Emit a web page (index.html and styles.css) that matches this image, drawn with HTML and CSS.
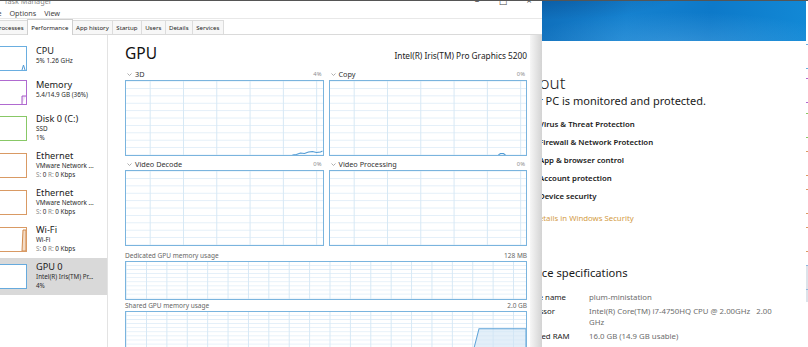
FILE: index.html
```html
<!DOCTYPE html>
<html>
<head>
  <title>Task Manager</title>
  <link rel="stylesheet" href="styles.css">
</head>
<body>
  <div class="topline"></div>

  <div class="settings">
    <div class="banner"></div>
    <div class="settings-body">
      <h1>About</h1>
      <p class="status">Your PC is monitored and protected.</p>
      <ul class="checks">
        <li>Virus &amp; Threat Protection</li>
        <li>Firewall &amp; Network Protection</li>
        <li>App &amp; browser control</li>
        <li>Account protection</li>
        <li>Device security</li>
      </ul>
      <a class="details-link">See details in Windows Security</a>
      <h2>Device specifications</h2>
      <div class="specs">
        <div class="spec-row"><span class="spec-key">Device name</span><span class="spec-val">plum-ministation</span></div>
        <div class="spec-row"><span class="spec-key">Processor</span><span class="spec-val">Intel(R) Core(TM) i7-4750HQ CPU @ 2.00GHz&nbsp;&nbsp; 2.00 GHz</span></div>
        <div class="spec-row"><span class="spec-key">Installed RAM</span><span class="spec-val">16.0 GB (14.9 GB usable)</span></div>
      </div>
    </div>
  </div>

  <div class="taskmgr">
    <div class="titlebar">
      <span class="app-icon"></span>
      <span class="title">Task Manager</span>
      <span class="win-buttons"><span>&#8211;</span><span>&#9633;</span><span>&#215;</span></span>
    </div>
    <div class="menubar">
      <span>File</span><span>Options</span><span>View</span>
    </div>
    <div class="tabs">
      <span class="tab">Processes</span>
      <span class="tab active">Performance</span>
      <span class="tab">App history</span>
      <span class="tab">Startup</span>
      <span class="tab">Users</span>
      <span class="tab">Details</span>
      <span class="tab">Services</span>
    </div>

    <div class="content">
      <div class="sidebar">
        <div class="item">
          <div class="thumb cpu"><svg viewBox="0 0 46 23" preserveAspectRatio="none"><polyline points="42,23 43.5,18 45,23" /></svg></div>
          <div class="item-text">
            <div class="item-title">CPU</div>
            <div class="item-sub">5% 1.26 GHz</div>
          </div>
        </div>
        <div class="item">
          <div class="thumb mem"><svg viewBox="0 0 46 23" preserveAspectRatio="none"><polyline points="42,23 42,15 46,15" /></svg></div>
          <div class="item-text">
            <div class="item-title">Memory</div>
            <div class="item-sub">5.4/14.9 GB (36%)</div>
          </div>
        </div>
        <div class="item">
          <div class="thumb disk"></div>
          <div class="item-text">
            <div class="item-title">Disk 0 (C:)</div>
            <div class="item-sub">SSD</div>
            <div class="item-sub">1%</div>
          </div>
        </div>
        <div class="item">
          <div class="thumb net"></div>
          <div class="item-text">
            <div class="item-title">Ethernet</div>
            <div class="item-sub">VMware Network ...</div>
            <div class="item-sub"><span class="dim">S:</span> 0 <span class="dim">R:</span> 0 Kbps</div>
          </div>
        </div>
        <div class="item">
          <div class="thumb net"></div>
          <div class="item-text">
            <div class="item-title">Ethernet</div>
            <div class="item-sub">VMware Network ...</div>
            <div class="item-sub"><span class="dim">S:</span> 0 <span class="dim">R:</span> 0 Kbps</div>
          </div>
        </div>
        <div class="item">
          <div class="thumb net"><svg viewBox="0 0 46 23" preserveAspectRatio="none"><polygon points="42,23 43,2 46,2 46,23" /></svg></div>
          <div class="item-text">
            <div class="item-title">Wi-Fi</div>
            <div class="item-sub">Wi-Fi</div>
            <div class="item-sub"><span class="dim">S:</span> 0 <span class="dim">R:</span> 0 Kbps</div>
          </div>
        </div>
        <div class="item selected">
          <div class="thumb gpu"></div>
          <div class="item-text">
            <div class="item-title">GPU 0</div>
            <div class="item-sub">Intel(R) Iris(TM) Pr...</div>
            <div class="item-sub">4%</div>
          </div>
        </div>
      </div>

      <div class="main">
        <div class="main-head">
          <span class="main-title">GPU</span>
          <span class="main-model">Intel(R) Iris(TM) Pro Graphics 5200</span>
        </div>

        <div class="engines">
          <div class="engine">
            <div class="engine-head">
              <span class="engine-name"><svg class="chev" viewBox="0 0 5 3"><polyline points="0.5,0.5 2.5,2.5 4.5,0.5" /></svg>3D</span>
              <span class="engine-val">4%</span>
            </div>
            <div class="graph">
              <svg viewBox="0 0 196 74" preserveAspectRatio="none"><polyline points="166,74 170,73.5 174,72 178,72.5 182,71 186,70.5 190,71.5 194,71 196,70" /></svg>
            </div>
          </div>
          <div class="engine">
            <div class="engine-head">
              <span class="engine-name"><svg class="chev" viewBox="0 0 5 3"><polyline points="0.5,0.5 2.5,2.5 4.5,0.5" /></svg>Copy</span>
              <span class="engine-val">0%</span>
            </div>
            <div class="graph">
              <svg viewBox="0 0 196 74" preserveAspectRatio="none"><polyline points="168,74 170,72.5 173,72.5 175,74" /></svg>
            </div>
          </div>
          <div class="engine">
            <div class="engine-head">
              <span class="engine-name"><svg class="chev" viewBox="0 0 5 3"><polyline points="0.5,0.5 2.5,2.5 4.5,0.5" /></svg>Video Decode</span>
              <span class="engine-val">0%</span>
            </div>
            <div class="graph"></div>
          </div>
          <div class="engine">
            <div class="engine-head">
              <span class="engine-name"><svg class="chev" viewBox="0 0 5 3"><polyline points="0.5,0.5 2.5,2.5 4.5,0.5" /></svg>Video Processing</span>
              <span class="engine-val">0%</span>
            </div>
            <div class="graph"></div>
          </div>
        </div>

        <div class="mem-head"><span>Dedicated GPU memory usage</span><span>128 MB</span></div>
        <div class="graph mem-graph dedicated"></div>
        <div class="mem-head"><span>Shared GPU memory usage</span><span>2.0 GB</span></div>
        <div class="graph mem-graph shared">
          <svg viewBox="0 0 400 38" preserveAspectRatio="none"><polygon points="347,38 353,16 400,16 400,38" /></svg>
        </div>
      </div>

      <div class="edge"></div>
    </div>
  </div>

  <div class="peek">
    <div class="peek-item"><div class="peek-box cpu"></div></div>
    <div class="peek-item"><div class="peek-box mem"></div></div>
    <div class="peek-item tall"><div class="peek-box disk"></div></div>
    <div class="peek-item tall"><div class="peek-box net"></div></div>
    <div class="peek-item tall"><div class="peek-box net"></div></div>
    <div class="peek-item tall"><div class="peek-box net"></div></div>
    <div class="peek-item tall selected"><div class="peek-box gpu"></div></div>
  </div>
</body>
</html>
```

FILE: styles.css
```css
body {
  margin: 0;
  width: 808px;
  height: 347px;
  overflow: hidden;
  position: relative;
  background: #fff;
  font-family: "Noto Sans", "DejaVu Sans", sans-serif;
  color: #1a1a1a;
}

.topline {
  position: absolute;
  left: 0;
  top: 0;
  width: 808px;
  height: 1px;
  background: #555;
  z-index: 5;
}

/* ---------- settings window (behind) ---------- */
.settings {
  position: absolute;
  left: 480px;
  top: 0;
  width: 326px;
  height: 347px;
  background: #fff;
  z-index: 1;
}
.banner {
  height: 41px;
  background:
    radial-gradient(ellipse 240px 50px at 62% 115%, rgba(120, 190, 240, 0.35), transparent 70%),
    radial-gradient(ellipse 200px 40px at 20% -20%, rgba(0, 40, 100, 0.35), transparent 70%),
    linear-gradient(100deg, #0b62ad 0%, #1581cf 45%, #0d79c9 70%, #1289d6 100%);
}
.settings-body {
  padding: 32px 0 0 39px;
}
.settings h1 {
  margin: 0;
  font-size: 17px;
  line-height: 20px;
  font-weight: 300;
}
.status {
  margin: 0;
  font-size: 11px;
  line-height: 15px;
}
.checks {
  list-style: none;
  margin: 7px 0 0;
  padding-left: 20px;
}
.checks li {
  font-size: 7.8px;
  line-height: 18px;
  font-weight: 600;
}
.details-link {
  display: block;
  margin-top: 8px;
  font-size: 7.8px;
  line-height: 10px;
  color: #d39b44;
}
.settings h2 {
  margin: 42px 0 0;
  font-size: 11.2px;
  line-height: 16px;
  font-weight: 400;
}
.specs {
  margin-top: 11px;
}
.spec-row {
  display: flex;
  font-size: 7.8px;
  line-height: 11px;
  margin-bottom: 3px;
}
.spec-key {
  width: 70px;
  flex: none;
  color: #222;
}
.spec-val {
  width: 190px;
  color: #6d6d6d;
}

/* ---------- task manager window (front) ---------- */
.taskmgr {
  position: absolute;
  left: -30px;
  top: -7px;
  width: 572px;
  height: 360px;
  background: #fff;
  z-index: 2;
  display: flex;
  flex-direction: column;
}
.titlebar {
  height: 17px;
  display: flex;
  align-items: center;
  padding-left: 22px;
  font-size: 7.3px;
  color: #8a8a8a;
}
.app-icon {
  width: 8px;
  height: 7px;
  background: #6b9bc9;
  margin-right: 4px;
}
.win-buttons {
  margin-left: auto;
  display: flex;
  color: #444;
  font-size: 9px;
}
.win-buttons span {
  width: 26px;
  text-align: center;
}
.menubar {
  height: 10px;
  line-height: 10px;
  padding-left: 17px;
  border-bottom: 1px solid #e8e8e8;
  font-size: 7.2px;
  color: #444;
  display: flex;
  gap: 2px;
}
.menubar span {
  padding: 0 3px;
}
.tabs {
  height: 15px;
  border-bottom: 1px solid #dadada;
  padding-left: 21px;
  display: flex;
  align-items: flex-end;
}
.tab {
  height: 13px;
  line-height: 13px;
  padding: 0 3.3px;
  border: 1px solid #dcdcdc;
  border-bottom: none;
  margin-right: -1px;
  background: #f7f7f7;
  font-size: 6.1px;
  color: #222;
}
.tab.active {
  height: 15px;
  line-height: 15px;
  margin-bottom: -1px;
  background: #fff;
  border-color: #cfcfcf;
  position: relative;
  z-index: 1;
}

.content {
  flex: 1;
  display: flex;
}

/* sidebar */
.sidebar {
  width: 137px;
  border-right: 1px solid #e3e3e3;
  padding-top: 7px;
  flex: none;
}
.item {
  display: flex;
  padding: 4px 0 5px 9px;
}
.item.selected {
  background: #d9d9d9;
}
.thumb {
  width: 48px;
  height: 25px;
  box-sizing: border-box;
  border: 1px solid;
  background: #fff;
  align-self: center;
  margin-right: 9px;
  flex: none;
}
.thumb svg {
  display: block;
  width: 100%;
  height: 100%;
}
.thumb.cpu { border-color: #6aaee0; }
.thumb.cpu polyline { fill: none; stroke: #4f99d3; stroke-width: 1; }
.thumb.mem { border-color: #b06ad0; }
.thumb.mem polyline { fill: #f1e3f7; stroke: #a459c6; stroke-width: 1; }
.thumb.disk { border-color: #88c866; }
.thumb.net { border-color: #d99a64; }
.thumb.net polygon { fill: #f4dcc6; stroke: #cf8a4e; stroke-width: 1; }
.thumb.gpu { border-color: #66aadd; }
.item-text {
  align-self: flex-start;
  white-space: nowrap;
}
.item-title {
  font-size: 9.2px;
  line-height: 10px;
  color: #1a1a1a;
}
.item-sub {
  font-size: 6.3px;
  line-height: 9px;
  color: #2a2a2a;
}
.dim {
  color: #8a8a8a;
}

/* main pane */
.main {
  flex: 1;
  padding: 8px 3px 0 17px;
  min-width: 0;
}
.main-head {
  display: flex;
  justify-content: space-between;
  align-items: flex-start;
  height: 25px;
}
.main-title {
  font-size: 15.5px;
  line-height: 20px;
  color: #111;
}
.main-model {
  margin-top: 7px;
  font-size: 8.3px;
  line-height: 11px;
  color: #222;
}
.engines {
  display: grid;
  grid-template-columns: 1fr 1fr;
  column-gap: 5px;
  row-gap: 2px;
}
.engine-head {
  display: flex;
  justify-content: space-between;
  align-items: center;
  height: 12px;
  padding: 0 2px 0 2px;
}
.engine-name {
  font-size: 7.3px;
  color: #333;
  display: flex;
  align-items: center;
}
.chev {
  width: 5px;
  height: 3px;
  margin-right: 3px;
}
.chev polyline {
  fill: none;
  stroke: #999;
  stroke-width: 0.8;
}
.engine-val {
  font-size: 5.8px;
  color: #8c8c8c;
}
.graph {
  height: 76px;
  box-sizing: border-box;
  border: 1px solid #7ab4de;
  background-color: #fff;
  background-image:
    linear-gradient(to right, #d6e8f5 1px, transparent 1px),
    linear-gradient(to bottom, #e2eef8 1px, transparent 1px);
  background-size: 33.3px 100%, 100% 7.4px;
  background-position: 23.7px 0, 0 7px;
}
.graph svg {
  display: block;
  width: 100%;
  height: 100%;
}
.graph polyline {
  fill: #e3eff9;
  stroke: #4f9ad4;
  stroke-width: 1;
}
.mem-head {
  display: flex;
  justify-content: space-between;
  height: 11px;
  line-height: 11px;
  font-size: 6.5px;
  color: #666;
}
.engines + .mem-head {
  margin-top: 4px;
}
.mem-graph {
  height: 39px;
  background-size: 20.4px 100%, 100% 4.1px;
  background-position: 20px 0, 0 3px;
}
.mem-graph.shared {
  height: 42px;
}
.mem-graph polygon {
  fill: rgba(208, 228, 245, 0.6);
  stroke: #5fa4d8;
  stroke-width: 1;
}
.edge {
  width: 12px;
  flex: none;
  background: linear-gradient(to right, #f6f6f6, #d3d3d3);
}

/* sliver of another window at the right edge */
.peek {
  position: absolute;
  left: 806px;
  top: 0;
  width: 2px;
  height: 347px;
  padding-top: 44px;
  box-sizing: border-box;
  background: #fff;
  z-index: 1;
}
.peek-item {
  height: 34px;
}
.peek-item.tall {
  height: 37px;
}
.peek-item.selected {
  background: #dde3ea;
}
.peek-box {
  height: 25px;
  box-sizing: border-box;
  border-top: 1px solid;
  border-bottom: 1px solid;
}
.peek-item.tall .peek-box {
  margin-top: 1px;
}
.peek-box.cpu { border-color: #6aaee0; }
.peek-box.mem { border-color: #b06ad0; }
.peek-box.disk { border-color: #88c866; }
.peek-box.net { border-color: #d99a64; }
.peek-box.gpu { border-color: #8fb8dc; }
```
